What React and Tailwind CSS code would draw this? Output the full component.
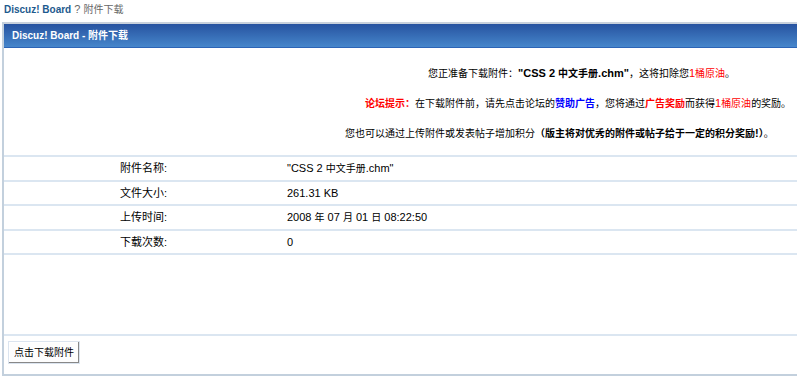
import React from 'react';

const font = { fontFamily: '"Liberation Sans", Tahoma, "Noto Sans CJK SC", sans-serif' };

function T({ children, cjk = 'text-[10px]' }) {
  const parts = String(children).split(/([\u3000-\u303f\u4e00-\u9fff\uff00-\uffef]+)/);
  return parts.map((p, i) =>
    /[\u3000-\u303f\u4e00-\u9fff\uff00-\uffef]/.test(p) ? (
      <span key={i} className={cjk}>{p}</span>
    ) : (
      <React.Fragment key={i}>{p}</React.Fragment>
    )
  );
}

const rows = [
  { label: '附件名称:', value: '"CSS 2 中文手册.chm"' },
  { label: '文件大小:', value: '261.31 KB' },
  { label: '上传时间:', value: '2008 年 07 月 01 日 08:22:50' },
  { label: '下载次数:', value: '0' },
];

export default function App() {
  return (
    <div className="w-[798px] h-[381px] bg-white text-[11px] text-black overflow-hidden" style={font}>
      {/* Breadcrumb */}
      <div className="pl-[4px] pt-[1px] h-[22px] leading-[16px]">
        <span className="font-bold text-[10px] text-[#1d5a8e]">Discuz! Board</span>
        <span className="text-[#666]"> ? <T>附件下载</T></span>
      </div>

      {/* Main table */}
      <div className="ml-[2px] mr-[1px] border-l-2 border-b-2 border-[#c3d0dd]">
        {/* Header */}
        <div className="h-[26px] border-t-2 border-[#c9d1dc] bg-gradient-to-b from-[#2853a0] to-[#4686cb] border-b border-b-[#2c64b6] flex items-center pl-[8px] font-bold text-[10px] text-white">
          Discuz! Board - 附件下载
        </div>

        {/* Message */}
        <div className="h-[109px] pt-[10px] border-b-2 border-[#dbe6f1]">
          <div className="h-[30px] leading-[30px] pl-[424px] whitespace-nowrap">
            <T>您正准备下载附件：</T><b><T>"CSS 2 中文手册.chm"</T></b><T>，这将扣除您</T><span className="text-[#ff0000]"><T>1桶原油</T></span><T>。</T>
          </div>
          <div className="h-[30px] leading-[30px] pl-[361px] whitespace-nowrap">
            <b className="text-[#ff0000]"><T>论坛提示：</T></b><T>在下载附件前，请先点击论坛的</T><b className="text-[#0000ff]"><T>赞助广告</T></b><T>，您将通过</T><b className="text-[#ff0000]"><T>广告奖励</T></b><T>而获得</T><span className="text-[#ff0000]"><T>1桶原油</T></span><T>的奖励。</T>
          </div>
          <div className="h-[30px] leading-[30px] pl-[341px] whitespace-nowrap">
            <T>您也可以通过上传附件或发表帖子增加积分</T><b><T>（版主将对优秀的附件或帖子给于一定的积分奖励!）</T></b><T>。</T>
          </div>
        </div>

        {/* Info rows */}
        {rows.map((r) => (
          <div key={r.label} className="h-[24.5px] flex items-center border-b-2 border-[#dbe6f1]">
            <div className="w-[283px] pl-[116px]"><T cjk="text-[11px]">{r.label}</T></div>
            <div><T>{r.value}</T></div>
          </div>
        ))}

        {/* Spacer */}
        <div className="h-[81px] border-b-2 border-[#dbe6f1]"></div>

        {/* Button */}
        <div className="h-[38px] flex items-start pt-[5px] pl-[4px]">
          <button
            className="h-[23px] px-[5px] bg-[#fdfdfd] border border-[#dbe4ef] shadow-[inset_-1px_-1px_0_#888,inset_1px_1px_0_#fff] text-[10px] leading-none"
            style={font}
          >
            点击下载附件
          </button>
        </div>
      </div>
    </div>
  );
}
